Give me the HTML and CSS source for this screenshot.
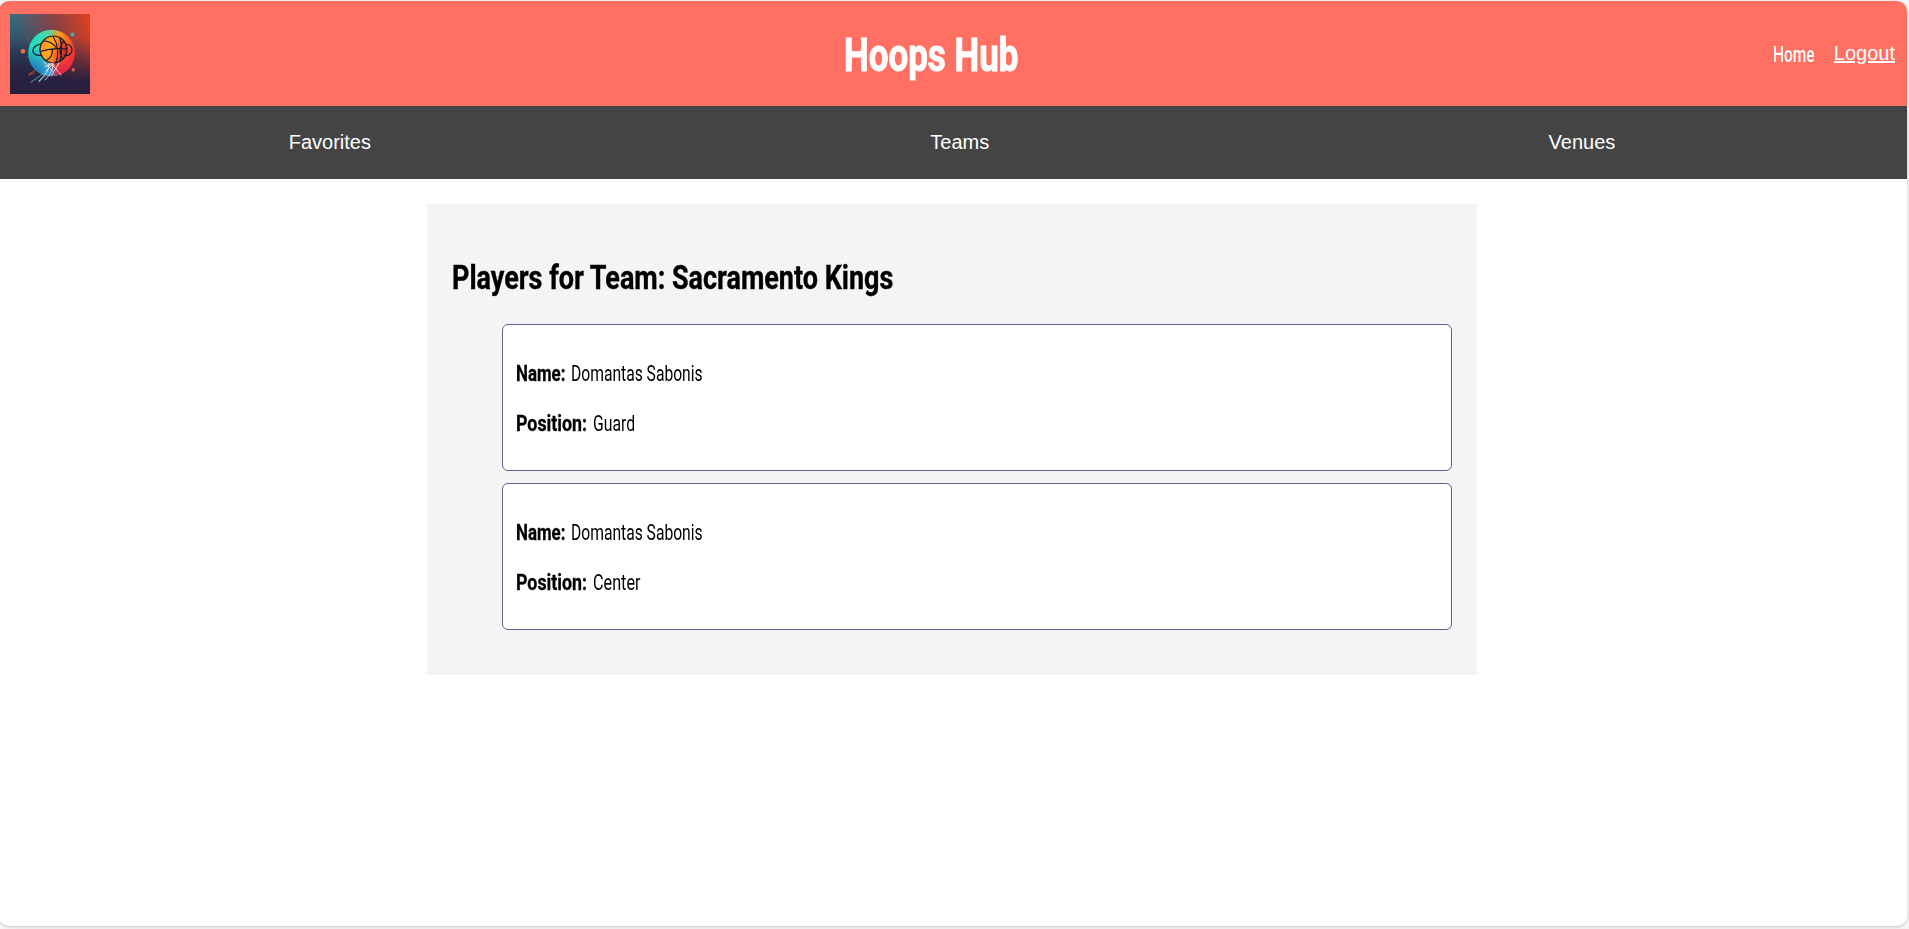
FILE: index.html
```html
<!DOCTYPE html>
<html lang="en">
<head>
<meta charset="utf-8">
<title>Hoops Hub</title>
<link rel="stylesheet" href="styles.css">
</head>
<body>
<div class="page">
  <header class="header">
    <svg class="logo" viewBox="0 0 80 80" role="img" aria-label="Hoops Hub logo">
      <defs>
        <linearGradient id="back" x1="0" y1="0" x2="0" y2="1"><stop offset="0" stop-color="#34707f"/><stop offset=".5" stop-color="#2e4560"/><stop offset="1" stop-color="#1f203e"/></linearGradient>
        <linearGradient id="glow" x1=".1" y1=".3" x2="1" y2="0"><stop offset="0" stop-color="#963c42" stop-opacity="0"/><stop offset=".5" stop-color="#963a3d" stop-opacity=".85"/><stop offset="1" stop-color="#e8401c"/></linearGradient>
        <linearGradient id="shade" x1="0" y1="0" x2="0" y2="1"><stop offset=".3" stop-color="#27203e" stop-opacity="0"/><stop offset=".85" stop-color="#27203e"/></linearGradient>
        <linearGradient id="disc" x1="0" y1=".4" x2="1" y2=".6"><stop offset="0" stop-color="#12e2cc"/><stop offset=".35" stop-color="#4fd6a6"/><stop offset=".58" stop-color="#fb9e18"/><stop offset=".95" stop-color="#f23b32"/></linearGradient>
        <linearGradient id="low" x1="0" y1="1" x2="1" y2=".7"><stop offset=".1" stop-color="#1769b5"/><stop offset=".42" stop-color="#2a9ad6"/><stop offset=".62" stop-color="#da2547"/><stop offset="1" stop-color="#f5263a"/></linearGradient>
        <linearGradient id="fade" x1="0" y1="0" x2="0" y2="1"><stop offset=".35" stop-color="#000"/><stop offset=".85" stop-color="#fff"/></linearGradient>
        <mask id="lower"><rect x="16" y="14" width="52" height="50" fill="url(#fade)"/></mask>
        <linearGradient id="ball" x1="0" y1=".3" x2="1" y2=".6"><stop offset="0" stop-color="#ff8820"/><stop offset=".4" stop-color="#ffad1b"/><stop offset=".7" stop-color="#f35a20"/><stop offset="1" stop-color="#c81430"/></linearGradient>
      </defs>
      <rect width="80" height="80" fill="url(#back)"/>
      <rect width="80" height="80" fill="url(#glow)"/>
      <rect width="80" height="80" fill="url(#shade)"/>
      <circle cx="41.5" cy="39" r="23.3" fill="url(#disc)"/>
      <circle cx="41.5" cy="39" r="23.3" fill="url(#low)" mask="url(#lower)"/>
      <circle cx="43.5" cy="35.5" r="13.5" fill="url(#ball)"/>
      <g fill="none" stroke="#17152c" stroke-width="1.2">
        <circle cx="43.5" cy="35.5" r="13.5"/>
        <path d="M31 30c-5 1-8 3.500-8 6.500 0 4 4 5.500 9 4.500M55.500 30c4 .5 6.500 3 6.500 6 0 4-4 6-8 5.500"/>
        <path d="M30 37.500c9-3 18-3.500 27-2.500M43 22.500c5 8 6 18 3 26M34 27c6 0 10 3 13 8M36 46.500c5-2 7-7 6-11M54 27c-5 5-5 13-1 18M50 24c2 6 2 16 0 23"/>
      </g>
      <g fill="none" stroke="#f4fbff" stroke-width=".8" stroke-linecap="round">
        <path d="M34 48c2 3 6 5 8 9M39 49c1 8-5 12-10 18M43 50c0 7-4 12-8 16M35 53l8-4M41 49l10 12M49 49c-2 5-5 7-7 12M36 57l7-7"/>
        <path stroke="#46c6e5" d="M38 54C34 60 28 63 21 68M39 57c-3 5-7 8-10 11"/>
        <path stroke="#d0522c" d="M26 56l-7 4M24 59l-5 2"/>
      </g>
      <circle cx="13" cy="37.300" r="2.300" fill="#f26b43"/>
      <circle cx="62.500" cy="20.500" r="2" fill="#31b6ad"/>
      <circle cx="63.300" cy="55.700" r="1.700" fill="#ef5340"/>
      <circle cx="17.300" cy="25.400" r=".7" fill="#b1534b"/>
    </svg>
    <h1 class="title"><span class="narrow narrow-title">Hoops Hub</span></h1>
    <nav class="account">
      <a class="home"><span class="narrow narrow-home">Home</span></a>
      <a class="logout">Logout</a>
    </nav>
  </header>
  <nav class="menu"><a>Favorites</a><a>Teams</a><a>Venues</a></nav>
  <main class="players">
    <h2 class="heading"><span class="narrow narrow-heading">Players for Team: Sacramento Kings</span></h2>
    <ul class="list">
      <li class="card">
        <p><b class="narrow label-name">Name:</b><span class="narrow value-name">Domantas Sabonis</span></p>
        <p><b class="narrow label-position">Position:</b><span class="narrow value-guard">Guard</span></p>
      </li>
      <li class="card">
        <p><b class="narrow label-name">Name:</b><span class="narrow value-name">Domantas Sabonis</span></p>
        <p><b class="narrow label-position">Position:</b><span class="narrow value-center">Center</span></p>
      </li>
    </ul>
  </main>
</div>
</body>
</html>
```
FILE: styles.css
```css
* { box-sizing: border-box; }
body { margin: 0; padding: 1px 2px 3px 0; height: 929px; background: #f5f5f5; font-family: "Liberation Sans", Arial, sans-serif; font-size: 20px; overflow: hidden; }
.page { height: 925px; margin-left: -1px; padding-left: 1px; background: #fff; border-radius: 10px; overflow: hidden; box-shadow: 0 1px 3px rgba(0, 0, 0, .2); }
.header { height: 105px; display: flex; align-items: flex-start; background: #ff7062; color: #fff; margin-left: -1px; padding: 13px 12px 0 11px; }
.logo { width: 80px; height: 80px; flex: none; }
.narrow { display: inline-block; white-space: nowrap; transform-origin: 0 50%; font-family: Roboto, sans-serif; }
.title { margin: 10px 0 0 754px; font-size: 46px; line-height: 62px; font-weight: 700; width: 174px; }
.narrow-title { transform: scaleX(.76); -webkit-text-stroke: 1px #fff; }
.account { margin-left: auto; display: flex; line-height: 24px; }
.home { width: 61px; margin-top: 28px; font-size: 22.5px; font-weight: 500; }
.narrow-home { transform: scaleX(.69); }
.logout { margin-top: 27px; text-decoration: underline; }
.menu { height: 73px; margin-left: -1px; padding: 0 12px 0 10px; display: flex; justify-content: space-around; align-items: center; background: #444; color: #fff; }
.menu a { padding: 0 10px; }
.players { width: 1050px; height: 471px; margin: 25px 0 0 427px; padding: 52px 25px 0; background: #f4f4f4; }
.heading { margin: 0; height: 68px; font-size: 34px; line-height: 42px; font-weight: 700; }
.narrow-heading { transform: scaleX(.793); -webkit-text-stroke: .4px #000; }
.list { margin: 0; padding: 0 0 0 50px; list-style: none; display: grid; gap: 12px; }
.card { height: 147px; padding: 33px 12px 0 13px; border: 1px solid #6b5b95; border-radius: 6px; background: #fff; color: #000; font-size: 22.5px; line-height: 30px; }
.card p { margin: 0 0 20px; display: flex; }
.label-name { width: 55px; transform: scaleX(.75); -webkit-text-stroke: .3px #000; }
.label-position { width: 77px; transform: scaleX(.79); -webkit-text-stroke: .3px #000; }
.value-name { transform: scaleX(.695); }
.value-guard { transform: scaleX(.7); }
.value-center { transform: scaleX(.72); }
```
